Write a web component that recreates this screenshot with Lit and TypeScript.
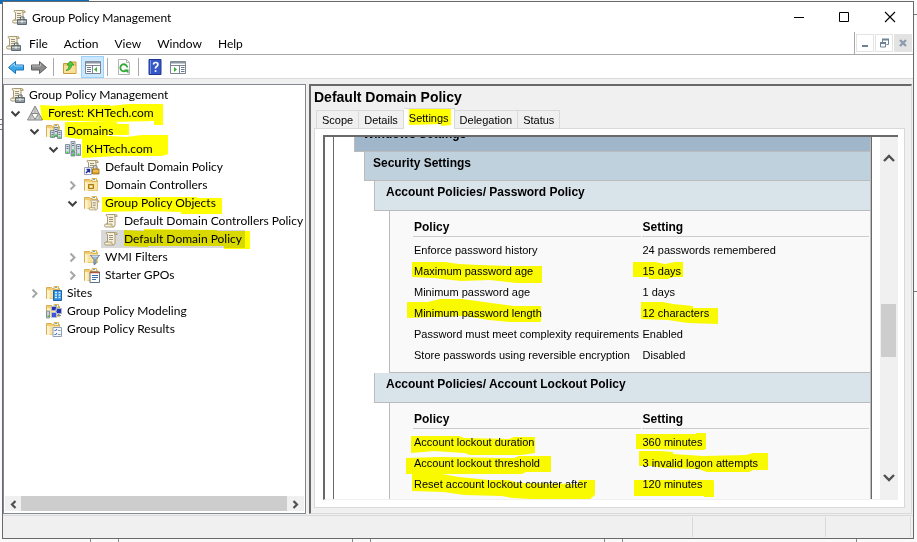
import { LitElement, html, css, svg, nothing, SVGTemplateResult } from "lit";
import { customElement, state } from "lit/decorators.js";
import { classMap } from "lit/directives/class-map.js";

/* ---------- icon artwork, all on a 16 x 16 grid ---------- */

const scroll = svg`
  <path d="M4.500 1.500h8q1.500 0 1.500 2h-2v8.500q0 2-2 2h-7q-1.500 0-1.500-1.500t1.500-1.500h1.500v-7.500q-1.500-.5-1.500-1.500t1.500-.5z" fill="#f7f1da" stroke="#a89a76"/>
  <path d="M12 3.500h2q0-2-1.500-2t-1 2zM3 11h6v1.500q0 1.500 1.500 1.500" fill="#e6d6a4" stroke="#a89a76" stroke-width=".8"/>
  <path d="M6 4.500h4M6 6.500h4M6 8.500h4" stroke="#9a9384"/>`;

const folder = svg`
  <path d="M.5 13.500v-11h5l1 1h7v10z" fill="#efcb74" stroke="#d9ae52"/>
  <path d="M8 1.500h4.500v3h-4.500z" fill="#fff3cf" stroke="#dcb552"/>
  <path d="M9 2.500h2" stroke="#5fa5d8"/>
  <path d="M1.500 5h12v8.500h-12z" fill="#fae3a0"/>
  <path d="M1 4.500l2.500 1.500v8h-2.500z" fill="#fff4cf"/>`;

const server = (x: number, y: number, h: number) => svg`
  <path d="M${x} ${y}h4v${h}h-4z" fill="#d5dde4" stroke="#6b7c8c" stroke-width=".8"/>
  <path d="M${x + 1} ${y + 2}h2M${x + 1} ${y + 4}h2" stroke="#4d6074" stroke-width=".8"/>
  <path d="M${x + 1} ${y + h - 2}h2v1.500h-2z" fill="#2fd52b"/>`;

const icons: Record<string, SVGTemplateResult> = {
  console: svg`${scroll}
    <path d="M6.500 10.500h9v5h-9z" fill="#8d9aa5" stroke="#5d6973"/>
    <path d="M9.500 10v-2h3.500v2" fill="none" stroke="#5d6973"/>
    <path d="M7 12.500h8" stroke="#c5ced6"/><path d="M10 11.500h2v2h-2z" fill="#f2e7b0"/>`,
  forest: svg`
    <path d="M8 1l7.500 14h-15z" fill="#d0d0d0" stroke="#858585"/>
    <path d="M4.500 8.500h7l-3.500 6z" fill="#fff" stroke="#858585"/>
    <path d="M8 2v6M4.500 9l-1 5M11.500 9l1 5" stroke="#a2a2a2" stroke-width=".8"/>`,
  domains: svg`${folder}${server(4.500, 7.500, 7)}${server(8, 4.500, 9)}${server(11.500, 7.500, 8)}`,
  domain: svg`${server(0.5, 3.500, 9)}${server(6, 0.5, 10)}${server(11.500, 3.500, 11)}
    <path d="M6 11h4v4h-4z" fill="#9fb0bf" stroke="#6b7c8c" stroke-width=".8"/>
    <path d="M7 13h2v1.500h-2z" fill="#2fd52b"/>`,
  link: svg`${scroll}
    <path d="M.5 8.500h7v7h-7z" fill="#fff" stroke="#9aa4b8"/>
    <path d="M2 14l3-3M2.500 10.500h3v3" stroke="#1b2c9c" stroke-width="1.500" fill="none"/>
    <path d="M9.500 10v-2q0-1.500 1.800-1.500t1.700 1.500v2" fill="none" stroke="#8b8b8b" stroke-width="1.200"/>
    <path d="M8.500 10h6.500v5h-6.500z" fill="#dca32c" stroke="#9b6c12" stroke-width=".8"/>
    <path d="M9 12h5.500" stroke="#f6d77b"/>`,
  ou: svg`${folder}
    <path d="M4.500 7.500h5v4h-5z" fill="#e6bd55" stroke="#a57819"/>
    <path d="M6 9h2v1.500h-2z" fill="#fff6d8"/>`,
  gpos: svg`${folder}
    <g transform="translate(4 4) scale(.78)">${scroll}</g>`,
  gpo: scroll,
  wmi: svg`${folder}
    <path d="M6.500 6.500h9l-3.500 4v4l-2 1v-5z" fill="#a9bdd2" stroke="#5c7690"/>
    <path d="M7.500 7h7" stroke="#eaf2fa"/>`,
  starter: svg`${folder}
    <path d="M6 5h9.500v10.500h-9.500z" fill="#fff" stroke="#5c7087"/>
    <path d="M6 5.500h9.500" stroke="#b0553c" stroke-width="1.500"/>
    <path d="M8 8.500h6M8 10.500h6M8 12.500h4" stroke="#3d6ba8"/>`,
  sites: svg`${folder}
    <path d="M7.500 5.500h8v10h-8z" fill="#2f8de0" stroke="#1f67ad"/>
    <path d="M9 7.500h2M12.500 7.500h2M9 10h2M12.500 10h2M9 12.500h2M12.500 12.500h2" stroke="#d8efff" stroke-width="1.400"/>`,
  modeling: svg`${folder}
    <path d="M5.500 3.500h5v4h-5zM10 5.500h5.500v5h-5.500z" fill="#2434b8" stroke="#aab4cc"/>
    <path d="M5.500 9.500h5v5h-5z" fill="#3f54dc" stroke="#b8c2d4"/>
    <path d="M.5 8h3v7h-3z" fill="#c9d1d8" stroke="#75818c" stroke-width=".8"/>
    <path d="M1.500 12.500h1.500v1.500h-1.500z" fill="#2fd22f"/>
    <path d="M11 12.500h4M12.500 11v2" stroke="#818c98"/>`,
  results: svg`${folder}
    <path d="M7 6.500h8.500v9h-8.500z" fill="#f4f8fc" stroke="#8da0b4"/>
    <path d="M8.500 9l1 1 1.500-2M8.500 13l1 1 1.500-2" stroke="#2f62c0" fill="none"/>
    <path d="M12 9.500h2.500M12 13.500h2.500" stroke="#8797a8"/>`,
  back: svg`<path d="M.5 8.500l7-6v3.500h8v5h-8v3.500z" fill="#3ba7e6" stroke="#1c72b4"/>
    <path d="M2.500 8l4-3.500v2.500h8.500" stroke="#98d8fa" fill="none"/>`,
  forward: svg`<path d="M15.500 8.500l-7-6v3.500h-8v5h8v3.500z" fill="#8a8a8a" stroke="#5e5e5e"/>
    <path d="M1 7h8.500v-2.500" stroke="#bdbdbd" fill="none"/>`,
  up: svg`
    <path d="M1.500 14.500v-10h5l1-1.500h6.500v11.500z" fill="#efcb6e" stroke="#c99b3b"/>
    <path d="M2 7h11.500v7h-11.500z" fill="#f9e09a"/>
    <path d="M4 11.500q3.500-1.500 3-5.500h-2l3.500-4 3.500 4h-2.300q-.5 5-5.700 5.500z" fill="#4ccb3f" stroke="#2c9a28" stroke-width=".8"/>`,
  tree: svg`
    <path d="M.5 2.500h15v12h-15z" fill="#fff" stroke="#7b8592"/>
    <path d="M1 3.500h14" stroke="#8b95a3" stroke-width="2"/><path d="M1 6.500h14M7.500 6v8" stroke="#7b8592"/>
    <path d="M2 8.500h4M2 10.500h4M2 12.500h4" stroke="#68788e"/>
    <path d="M12 8v5l-3-2.500z" fill="#31b032"/>`,
  refresh: svg`
    <path d="M2.500.5h8l3 3v12h-11z" fill="#fbfbfb" stroke="#b4b4b4"/>
    <path d="M10.500.5v3h3" fill="none" stroke="#b4b4b4"/>
    <path d="M10 11.500a3.500 3.500 0 1 1 1.300-3" fill="none" stroke="#2ea836" stroke-width="1.800"/>
    <path d="M8 10.500h4.500v4z" fill="#2ea836"/>`,
  help: svg`
    <path d="M2 .5h12v15h-12z" fill="#3558c8" stroke="#1f3690"/>
    <path d="M3.500 1v14" stroke="#7893ea"/>
    <path d="M6.500 5.500q0-2 2.200-2t2.200 2q0 1.200-1.300 2t-1.100 2.200" fill="none" stroke="#fff" stroke-width="1.700"/>
    <path d="M7.700 11.200h1.700v1.700h-1.700z" fill="#fff"/>`,
  pane: svg`
    <path d="M.5 2.500h15v12h-15z" fill="#fff" stroke="#7b8592"/>
    <path d="M1 3.500h14" stroke="#8b95a3" stroke-width="2"/><path d="M1 6.500h14M9.500 6v8" stroke="#7b8592"/>
    <path d="M11 8.500h3.500M11 10.500h3.500M11 12.500h3.500" stroke="#68788e"/>
    <path d="M4 8v5l3-2.500z" fill="#31b032"/>`,
  minimize: svg`<path d="M4 8.500h10" stroke="#000"/>`,
  maximize: svg`<path d="M3.500 3.500h9v9h-9z" fill="none" stroke="#000"/>`,
  close: svg`<path d="M3 3l10 10M13 3l-10 10" stroke="#000" stroke-width="1.100"/>`,
  mdiMin: svg`<path d="M5 11h6" stroke="#6f8295" stroke-width="2"/>`,
  mdiRestore: svg`<path d="M6.500 7v-2.500h6v5h-2" fill="none" stroke="#6f8295"/><path d="M6 4.500h7" stroke="#6f8295" stroke-width="2"/>
    <path d="M4.500 8h5v4h-5z" fill="none" stroke="#6f8295"/><path d="M4 8h6" stroke="#6f8295" stroke-width="2"/>`,
  mdiClose: svg`<path d="M5 5l6 6M11 5l-6 6" stroke="#8d9caf" stroke-width="2.400"/>`,
  chevDown: svg`<path d="M4.500 6.500l4 4 4-4" fill="none" stroke="#404040" stroke-width="2"/>`,
  chevRight: svg`<path d="M6.500 4.500l4 4-4 4" fill="none" stroke="#a6a6a6" stroke-width="2"/>`,
  scrollUp: svg`<path d="M3 11l5-5 5 5" fill="none" stroke="#505050" stroke-width="2.400"/>`,
  scrollDown: svg`<path d="M3 5l5 5 5-5" fill="none" stroke="#505050" stroke-width="2.400"/>`,
  scrollLeft: svg`<path d="M10.500 5l-3.500 3.500 3.500 3.500" fill="none" stroke="#505050" stroke-width="2.200"/>`,
  scrollRight: svg`<path d="M5.500 5l3.500 3.500-3.500 3.500" fill="none" stroke="#505050" stroke-width="2.200"/>`,
};

const icon = (name: string) =>
  html`<svg class="icon" width="16" height="16" viewBox="0 0 16 16" aria-hidden="true">${icons[name]}</svg>`;

/* A highlighter stroke laid over its label; points count from the label's top left. */
const marked = (text: string, points?: string) => html`<span class="label"
  >${text}${points
    ? html`<svg class="marker" width="1" height="1" aria-hidden="true"><polygon points=${points} /></svg>`
    : nothing}</span
>`;

const shared = css`
  * {
    box-sizing: border-box;
  }
  button {
    font: inherit;
    color: inherit;
    background: none;
    border: 0;
    padding: 0;
    margin: 0;
  }
  .icon {
    display: block;
    flex: none;
  }
  .label {
    position: relative;
    display: inline-block;
    white-space: nowrap;
  }
  .marker {
    position: absolute;
    top: 0;
    left: 0;
    overflow: visible;
    fill: #ff0;
    mix-blend-mode: multiply;
    pointer-events: none;
  }
`;

/* ---------- console tree ---------- */

interface TreeNode {
  text: string;
  icon: string;
  open?: boolean;
  selected?: boolean;
  mark?: string;
  children?: TreeNode[];
}

const tree: TreeNode = {
  text: "Group Policy Management",
  icon: "console",
  open: true,
  children: [
    {
      text: "Forest: KHTech.com",
      icon: "forest",
      open: true,
      mark: "-8,1 10,2 34,1 62,1 62,2 80,0 115,0 115,21 106,21 106,17 60,18 30,17 -6,16",
      children: [
        {
          text: "Domains",
          icon: "domains",
          open: true,
          mark: "-2,0 50,0 50,2 62,2 62,13 40,13 40,15 12,17 -2,15",
          children: [
            {
              text: "KHTech.com",
              icon: "domain",
              open: true,
              mark: "-4,-2 6,-2 6,-5 40,-3 56,-5 82,-5 82,14 76,16 30,16 -4,18",
              children: [
                { text: "Default Domain Policy", icon: "link" },
                { text: "Domain Controllers", icon: "ou", open: false, children: [] },
                {
                  text: "Group Policy Objects",
                  icon: "gpos",
                  open: true,
                  mark: "-3,3 92,3 92,4 117,4 117,20 76,20 76,18 40,17 -3,18",
                  children: [
                    { text: "Default Domain Controllers Policy", icon: "gpo" },
                    {
                      text: "Default Domain Policy",
                      icon: "gpo",
                      selected: true,
                      mark: "0,0 20,1 20,-1 93,0 93,1 126,1 126,19 100,19 100,16 24,16 24,17 0,16",
                    },
                  ],
                },
                { text: "WMI Filters", icon: "wmi", open: false, children: [] },
                { text: "Starter GPOs", icon: "starter", open: false, children: [] },
              ],
            },
          ],
        },
        { text: "Sites", icon: "sites", open: false, children: [] },
        { text: "Group Policy Modeling", icon: "modeling" },
        { text: "Group Policy Results", icon: "results" },
      ],
    },
  ],
};

@customElement("console-tree")
export class ConsoleTree extends LitElement {
  static styles = [
    shared,
    css`
      :host {
        display: flex;
        flex-direction: column;
        border: 1px solid #828790;
        background: #fff;
        padding: 1px;
        min-height: 0;
      }
      .view {
        flex: 1;
        overflow: hidden;
        min-height: 0;
      }
      ul {
        list-style: none;
        margin: 0;
        padding: 0;
      }
      .branch {
        padding-left: 19px;
      }
      .root > .branch {
        padding-left: 0;
      }
      .row {
        display: flex;
        align-items: center;
        height: 18px;
        line-height: 18px;
      }
      .root > .row {
        padding-left: 4px;
      }
      .twisty {
        width: 16px;
        height: 16px;
        margin: 0 2px;
        flex: none;
      }
      .root > .row > .twisty {
        display: none;
      }
      .item {
        display: flex;
        align-items: center;
        gap: 5px;
        padding: 0 3px 0 2px;
      }
      .root > .row > .item {
        gap: 4px;
        padding-left: 0;
      }
      .selected {
        background: #d9d9d9;
      }
      .hbar {
        display: flex;
        align-items: center;
        height: 15px;
        background: #f0f0f0;
        margin-bottom: 1px;
      }
      .thumb {
        flex: 1;
        align-self: stretch;
        background: #cdcdcd;
        margin-right: 1px;
      }
    `,
  ];

  private node(n: TreeNode, root = false): unknown {
    return html`<li class=${classMap({ root })} role="treeitem">
      <div class="row">
        ${n.children
          ? html`<button class="twisty" aria-label=${`Toggle ${n.text}`}>${icon(n.open ? "chevDown" : "chevRight")}</button>`
          : html`<span class="twisty"></span>`}
        <span class=${classMap({ item: true, selected: !!n.selected })}>${icon(n.icon)}${marked(n.text, n.mark)}</span>
      </div>
      ${n.open && n.children
        ? html`<ul class="branch" role="group">
            ${n.children.map((c) => this.node(c))}
          </ul>`
        : nothing}
    </li>`;
  }

  render() {
    return html`<div class="view">
        <ul role="tree">
          ${this.node(tree, true)}
        </ul>
      </div>
      <div class="hbar">
        <button aria-label="Scroll left">${icon("scrollLeft")}</button>
        <div class="thumb"></div>
        <button aria-label="Scroll right">${icon("scrollRight")}</button>
      </div>`;
  }
}

/* ---------- settings report ---------- */

interface Setting {
  name: string;
  value: string;
  nameMark?: string;
  valueMark?: string;
}

interface Section {
  title: string;
  rows: Setting[];
}

const sections: Section[] = [
  {
    title: "Account Policies/ Password Policy",
    rows: [
      { name: "Enforce password history", value: "24 passwords remembered" },
      {
        name: "Maximum password age",
        value: "15 days",
        nameMark: "-2,1 31,1 45,3 65,4 95,5 128,5 128,22 102,22 76,19 47,20 20,17 -2,16",
        valueMark: "-10,1 12,1 22,3 32,1 40,1 40,16 30,16 25,18 6,18 6,16 -10,16",
      },
      { name: "Minimum password age", value: "1 days" },
      {
        name: "Minimum password length",
        value: "12 characters",
        nameMark: "-7,-1 14,-1 26,-4 48,-4 70,-1 100,3 127,3 127,19 95,19 75,17 50,13 -7,15",
        valueMark: "-2,-1 20,-1 30,1 50,3 50,5 75,5 75,21 45,20 25,17 -2,16",
      },
      { name: "Password must meet complexity requirements", value: "Enabled" },
      { name: "Store passwords using reversible encryption", value: "Disabled" },
    ],
  },
  {
    title: "Account Policies/ Account Lockout Policy",
    rows: [
      {
        name: "Account lockout duration",
        value: "360 minutes",
        nameMark: "-3,4 45,4 50,6 95,7 100,5 121,5 121,21 108,23 56,23 50,21 20,19 -3,21",
        valueMark: "-7,2 53,2 53,1 63,1 63,17 60,18 -7,17",
      },
      {
        name: "Account lockout threshold",
        value: "3 invalid logon attempts",
        nameMark: "-8,5 25,4 100,5 105,3 137,3 137,19 112,19 108,21 -8,21",
        valueMark: "-4,-2 17,-2 30,-1 30,1 60,3 103,2 110,0 125,0 125,17 110,17 106,19 64,19 55,16 20,15 8,13 -4,13",
      },
      {
        name: "Reset account lockout counter after",
        value: "120 minutes",
        nameMark: "-2,0 28,0 45,3 75,6 94,6 105,9 164,10 165,6 181,6 181,21 175,26 138,26 98,24 88,22 50,21 30,18 -2,17",
        valueMark: "-9,6 70,6 71,7 71,23 61,23 61,22 -9,22",
      },
    ],
  },
];

@customElement("settings-report")
export class SettingsReport extends LitElement {
  static styles = [
    shared,
    css`
      :host {
        display: flex;
        overflow: hidden;
        border: 1px solid #f0f0f0;
        border-top: 2px solid #696969;
        border-left: 2px solid #696969;
        border-right: 0;
        background: #fff;
        font-size: 12px;
      }
      .page {
        flex: 1;
        min-width: 0;
        margin: 0 8px;
        border: solid #696969;
        border-width: 0 1px;
        padding-left: 20px;
        overflow: hidden;
      }
      .bar {
        height: 29px;
        margin: 0;
        padding-left: 8px;
        border: 1px solid #bbb;
        border-top: 0;
        background: #c0d1de;
        font-size: 12px;
        font-weight: bold;
        line-height: 22px;
      }
      .top {
        background: #a0b6cb;
        margin-top: -14px;
      }
      .security {
        margin-left: 10px;
      }
      .group {
        margin-left: 20px;
      }
      .sub {
        height: 30px;
        padding-left: 11px;
        background: #d9e3ea;
      }
      .body {
        margin-left: 15px;
        border: solid #bbb;
        border-width: 0 1px 1px;
        background: #f9f9f9;
        padding: 7px 0 6px 22px;
      }
      table {
        width: 100%;
        table-layout: fixed;
        border-spacing: 1px 0;
        font-size: 12px;
      }
      th {
        text-align: left;
        padding: 0 0 0 1px;
        height: 19px;
        line-height: 18px;
        border-bottom: 1px solid #ccc;
      }
      tbody::before {
        content: "";
        display: block;
        height: 3px;
      }
      td {
        padding: 0 0 0 1px;
        height: 21px;
        line-height: 21px;
        font-size: 11px;
      }
      .vbar {
        display: flex;
        flex-direction: column;
        align-items: center;
        width: 18px;
        background: #f0f0f0;
        padding: 13px 0;
      }
      .track {
        flex: 1;
        display: flex;
        flex-direction: column;
        align-self: stretch;
        padding: 0 2px 0 1px;
      }
      .before {
        flex: 138;
      }
      .thumb {
        flex: 53;
        background: #cdcdcd;
      }
      .after {
        flex: 113;
      }
    `,
  ];

  render() {
    return html`<div class="page">
        <h2 class="bar top">Windows Settings</h2>
        <h3 class="bar security">Security Settings</h3>
        ${sections.map(
          (s) => html`<section class="group">
            <h4 class="bar sub">${s.title}</h4>
            <div class="body">
              <table>
                <thead>
                  <tr>
                    <th scope="col">Policy</th>
                    <th scope="col">Setting</th>
                  </tr>
                </thead>
                <tbody>
                  ${s.rows.map(
                    (r) => html`<tr>
                      <td>${marked(r.name, r.nameMark)}</td>
                      <td>${marked(r.value, r.valueMark)}</td>
                    </tr>`
                  )}
                </tbody>
              </table>
            </div>
          </section>`
        )}
      </div>
      <div class="vbar">
        <button aria-label="Scroll up">${icon("scrollUp")}</button>
        <div class="track">
          <div class="before"></div>
          <div class="thumb"></div>
          <div class="after"></div>
        </div>
        <button aria-label="Scroll down">${icon("scrollDown")}</button>
      </div>`;
  }
}

/* ---------- window ---------- */

@customElement("app-root")
export class AppRoot extends LitElement {
  static styles = [
    shared,
    css`
      :host {
        display: block;
        position: relative;
        height: 100vh;
        box-sizing: border-box;
        padding: 1px 3px 3px 2px;
        background: #fafafa;
        overflow: hidden;
        color: #000;
        font: 12px Lato, "Open Sans", sans-serif;
      }
      .behind {
        position: absolute;
        top: 0;
        left: 0;
        width: 100%;
        height: 100%;
      }
      .window {
        position: relative;
        display: flex;
        flex-direction: column;
        height: 100%;
        border: 1px solid #696969;
        background: #f0f0f0;
      }
      .title {
        display: flex;
        align-items: center;
        height: 30px;
        padding-left: 8px;
        gap: 5px;
        background: #fff;
      }
      .caption {
        flex: 1;
        margin: 0;
        font-size: 12px;
        font-weight: normal;
      }
      .system {
        width: 46px;
        height: 30px;
        display: grid;
        place-items: center;
      }
      .controls {
        display: flex;
      }
      .menu {
        display: flex;
        align-items: center;
        height: 23px;
        padding-left: 2px;
        background: #fff;
        border-bottom: 1px solid #a8a8a8;
      }
      .menu nav {
        flex: 1;
        display: flex;
        gap: 16px;
        padding-left: 8px;
      }
      .mdi {
        display: flex;
        align-items: center;
        gap: 1px;
        align-self: stretch;
        border-left: 1px solid #a8a8a8;
        padding: 0 1px;
      }
      .mdi button {
        width: 18px;
        height: 18px;
        display: grid;
        place-items: center;
        border: 1px solid #e3e3e3;
      }
      .mdi .off {
        background: #e3e3e3;
      }
      .tools {
        display: flex;
        align-items: center;
        height: 24px;
        padding-left: 1px;
        background: #fff;
        border-bottom: 1px solid #d9d9d9;
      }
      .tool {
        display: grid;
        place-items: center;
        width: 23px;
        height: 22px;
      }
      .pressed {
        background: #cce8ff;
        border: 1px solid #99d1ff;
      }
      .rule {
        width: 1px;
        height: 18px;
        background: #a8a8a8;
        margin: 0 4px 0 3px;
      }
      .main {
        flex: 1;
        display: grid;
        grid-template-columns: minmax(0, 303fr) minmax(0, 604fr);
        gap: 3px;
        padding: 5px 0 1px;
        min-height: 0;
      }
      .detail {
        display: flex;
        flex-direction: column;
        min-height: 0;
        border: 1px solid #d9d9d9;
        border-top: 2px solid #696969;
        border-left: 2px solid #696969;
        margin-right: 1px;
        padding: 0 6px 5px 3px;
        font-family: "Liberation Sans", Arial, sans-serif;
      }
      .heading {
        margin: 0;
        font-size: 14px;
        line-height: 22px;
      }
      .tabs {
        display: flex;
        align-items: flex-end;
        height: 20px;
        padding-left: 2px;
        font-size: 11px;
      }
      .tab {
        height: 18px;
        padding: 0 5px;
        border: 1px solid #d9d9d9;
        border-width: 1px 1px 0 0;
        line-height: 18px;
      }
      .tab:first-child {
        border-left-width: 1px;
      }
      .current {
        height: 21px;
        margin-bottom: -1px;
        padding: 0 5px 4px;
        background: #fff;
        position: relative;
      }
      .sheet {
        flex: 1;
        display: flex;
        min-height: 0;
        border: 1px solid #d9d9d9;
        background: #fff;
        padding: 6px 6px 7px 8px;
      }
      settings-report {
        flex: 1;
      }
      .status {
        display: flex;
        justify-content: flex-end;
        height: 23px;
        border-top: 1px solid #d9d9d9;
        padding: 1px 2px 1px 0;
      }
      .cell {
        border-left: 1px solid #d9d9d9;
      }
      .wide {
        width: 133px;
      }
      .narrow {
        width: 86px;
        border-right: 1px solid #d9d9d9;
      }
    `,
  ];

  @state() private tab = "Settings";

  private tool(name: string, label: string, pressed = false) {
    return html`<button class=${classMap({ tool: true, pressed })} aria-label=${label}>${icon(name)}</button>`;
  }

  render() {
    return html`
      <svg class="behind" aria-hidden="true">
        <rect width="89" height="4" fill="#0d6ebc" />
        <path d="M0 119.500h3M0 124.500h2M0 129.500h3M914 14.500h3M914 291.500h3" stroke="#777" />
        <path d="M90.500 538v4M118.500 538v4M352.500 538v4M370.500 538v4M604.500 538v4M622.500 538v4M856.500 538v4" stroke="#888" />
      </svg>
      <div class="window">
        <header class="title">
          ${icon("console")}
          <h1 class="caption">Group Policy Management</h1>
          <div class="controls">
            <button class="system" aria-label="Minimize">${icon("minimize")}</button>
            <button class="system" aria-label="Maximize">${icon("maximize")}</button>
            <button class="system" aria-label="Close">${icon("close")}</button>
          </div>
        </header>
        <div class="menu">
          ${icon("console")}
          <nav>${["File", "Action", "View", "Window", "Help"].map((m) => html`<button>${m}</button>`)}</nav>
          <div class="mdi">
            <button aria-label="Minimize console">${icon("mdiMin")}</button>
            <button aria-label="Restore console">${icon("mdiRestore")}</button>
            <button class="off" aria-label="Close console">${icon("mdiClose")}</button>
          </div>
        </div>
        <div class="tools" role="toolbar">
          ${this.tool("back", "Back")}${this.tool("forward", "Forward")}
          <span class="rule"></span>
          ${this.tool("up", "Up one level")}${this.tool("tree", "Show console tree", true)}
          <span class="rule"></span>
          ${this.tool("refresh", "Refresh")}
          <span class="rule"></span>
          ${this.tool("help", "Help")}${this.tool("pane", "Show action pane")}
        </div>
        <main class="main">
          <console-tree></console-tree>
          <section class="detail">
            <h2 class="heading">Default Domain Policy</h2>
            <div class="tabs" role="tablist">
              ${["Scope", "Details", "Settings", "Delegation", "Status"].map(
                (t) => html`<button
                  role="tab"
                  aria-selected=${t === this.tab}
                  class=${classMap({ tab: true, current: t === this.tab })}
                  @click=${() => (this.tab = t)}
                >
                  ${marked(t, t === "Settings" ? "0,0 42,0 42,16 32,17 32,15 0,16" : undefined)}
                </button>`
              )}
            </div>
            <div class="sheet"><settings-report></settings-report></div>
          </section>
        </main>
        <footer class="status">
          <span class="cell wide"></span>
          <span class="cell narrow"></span>
        </footer>
      </div>
    `;
  }
}
